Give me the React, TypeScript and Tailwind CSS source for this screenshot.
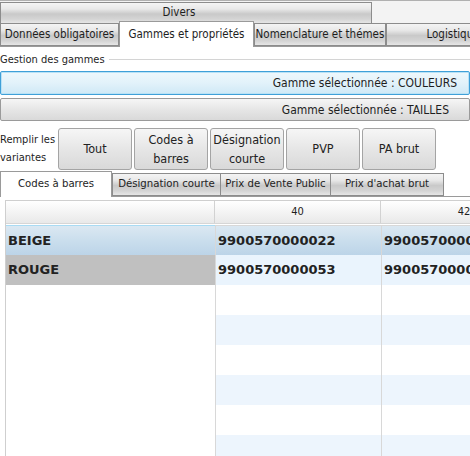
import React from 'react';

const tabBg =
  'bg-[linear-gradient(to_bottom,#f4f4f4_0%,#e8e8e8_30%,#c9c9c9_55%,#d4d4d4_80%,#e6e6e6_100%)]';
const btnBg = 'bg-[linear-gradient(to_bottom,#f6f6f6_0%,#e6e6e6_50%,#d9d9d9_100%)]';

function Tab({ label, w, active = false, cls = '' }: { label: string; w: string; active?: boolean; cls?: string }) {
  if (active) {
    return (
      <div className={`${w} h-[26px] -mb-px shrink-0 relative z-10 flex items-center justify-center whitespace-nowrap bg-white border border-b-0 border-[#9a9a9a] ${cls}`}>
        {label}
      </div>
    );
  }
  return (
    <div className={`${w} h-[23px] shrink-0 flex items-center justify-center whitespace-nowrap overflow-hidden border border-[#8c8c8c] ${tabBg} ${cls}`}>
      {label}
    </div>
  );
}

function FillButton({ children }: { children: React.ReactNode }) {
  return (
    <button className={`w-[74px] h-[42px] shrink-0 rounded-[3px] border border-[#a4a4a4] ${btnBg} text-[12.5px] leading-[19px] text-[#222] whitespace-nowrap`}>
      {children}
    </button>
  );
}

const rows = [
  { name: 'BEIGE', codes: ['9900570000022', '9900570000039'] },
  { name: 'ROUGE', codes: ['9900570000053', '9900570000060'] },
];

export default function App() {
  const filler = Array.from({ length: 6 }, (_, i) => i + 2);

  return (
    <div className="w-[470px] h-[456px] overflow-hidden bg-white text-[11px] text-[#1e1e1e] font-['DejaVu_Sans_Condensed','DejaVu_Sans',sans-serif]">
      {/* top tab rows */}
      <div className="bg-[#f3f3f3] border-t border-[#b0b0b0] pt-px text-[11.5px]">
        <div className="flex">
          <div className={`w-[372px] h-[21px] flex items-center justify-center pr-[14px] border border-b-0 border-[#8c8c8c] ${tabBg}`}>
            Divers
          </div>
        </div>
        <div className="flex items-end h-[24px] border-b border-[#9a9a9a]">
          <Tab label="Données obligatoires" w="w-[119px]" />
          <Tab label="Gammes et propriétés" w="w-[135px]" active />
          <Tab label="Nomenclature et thémes" w="w-[132px]" />
          <Tab label="Logistique" w="w-[134px]" cls="overflow-visible" />
        </div>
      </div>

      {/* Gestion des gammes */}
      <div className="flex items-center h-[24px]">
        <span className="pr-1 leading-none whitespace-nowrap">Gestion des gammes</span>
        <div className="flex-1 h-px bg-[#d4d4d4]" />
      </div>

      <div className="flex flex-col gap-[3px] text-[12px]">
        <button className="w-[470px] h-[24px] flex items-center justify-end pr-[12px] rounded-[2px] border border-[#3fa0d8] bg-[linear-gradient(to_bottom,#eef8fc_0%,#e2f2fa_50%,#cfe9f6_100%)] shadow-[inset_0_0_0_1px_#b9e2f6] whitespace-nowrap">
          Gamme sélectionnée : COULEURS
        </button>
        <button className={`w-[470px] h-[23px] flex items-center justify-end pr-[20px] rounded-[2px] border border-[#9a9a9a] ${btnBg} whitespace-nowrap`}>
          Gamme sélectionnée : TAILLES
        </button>
      </div>

      {/* Remplir les variantes */}
      <div className="flex items-center gap-[2px] mt-[6px] h-[43px]">
        <div className="w-[56px] leading-[18px] shrink-0 whitespace-nowrap">
          Remplir les
          <br />
          variantes
        </div>
        <FillButton>Tout</FillButton>
        <FillButton>
          Codes à<br />barres
        </FillButton>
        <FillButton>
          Désignation<br />courte
        </FillButton>
        <FillButton>PVP</FillButton>
        <FillButton>PA brut</FillButton>
      </div>

      {/* sub tabs */}
      <div className="flex items-end h-[26px] mt-[1px] border-b border-[#9a9a9a] text-[11.3px]">
        <Tab label="Codes à barres" w="w-[112px]" active />
        <Tab label="Désignation courte" w="w-[109px]" cls="h-[22px]" />
        <Tab label="Prix de Vente Public" w="w-[110px]" cls="h-[22px] border-l-0" />
        <Tab label="Prix d'achat brut" w="w-[113px]" cls="h-[22px] border-l-0" />
      </div>

      {/* grid */}
      <div className="ml-[5px] mt-[3px] border-l border-t border-[#cfcfcf] w-[465px] font-['DejaVu_Sans',sans-serif]">
        <div className="flex h-[23px] bg-[linear-gradient(to_bottom,#ffffff_0%,#f4f4f4_50%,#e9e9e9_100%)] border-b border-[#d6d6d6] text-[11px] font-['DejaVu_Sans_Condensed','DejaVu_Sans',sans-serif]">
          <div className="w-[209px] shrink-0 border-r border-[#d2d2d2]" />
          <div className="w-[166px] shrink-0 flex items-center justify-center border-r border-[#d2d2d2]">40</div>
          <div className="w-[166px] shrink-0 flex items-center justify-center">42</div>
        </div>

        <div className="mt-px">
          {rows.map((r, i) => {
            const selected = i === 0;
            const first = selected
              ? 'bg-[linear-gradient(to_bottom,#dbe8f2_0%,#cadeed_50%,#bcd4e8_100%)] border-t border-[#a9dbf3]'
              : 'bg-[#c0c0c0]';
            const cell = selected
              ? 'bg-[linear-gradient(to_bottom,#dbe8f2_0%,#cadeed_50%,#bcd4e8_100%)] border-t border-[#a9dbf3]'
              : 'bg-[#eaf4fd]';
            return (
              <div key={r.name} className="flex h-[30px] font-bold text-[13px] text-[#222]">
                <div className={`w-[209px] shrink-0 flex items-center pl-[2px] ${first}`}>{r.name}</div>
                <div className={`w-[166px] shrink-0 flex items-center pl-[2px] border-l border-[#d8d8d8] ${cell}`}>{r.codes[0]}</div>
                <div className={`w-[166px] shrink-0 flex items-center pl-[2px] border-l border-[#d8d8d8] ${cell}`}>{r.codes[1]}</div>
              </div>
            );
          })}
          {filler.map((i) => {
            const stripe = i % 2 === 1 ? 'bg-[#edf5fd]' : 'bg-white';
            return (
              <div key={i} className="flex h-[30px]">
                <div className="w-[209px] shrink-0 bg-white" />
                <div className={`w-[166px] shrink-0 border-l border-[#d8d8d8] ${stripe}`} />
                <div className={`w-[166px] shrink-0 border-l border-[#d8d8d8] ${stripe}`} />
              </div>
            );
          })}
        </div>
      </div>
    </div>
  );
}
